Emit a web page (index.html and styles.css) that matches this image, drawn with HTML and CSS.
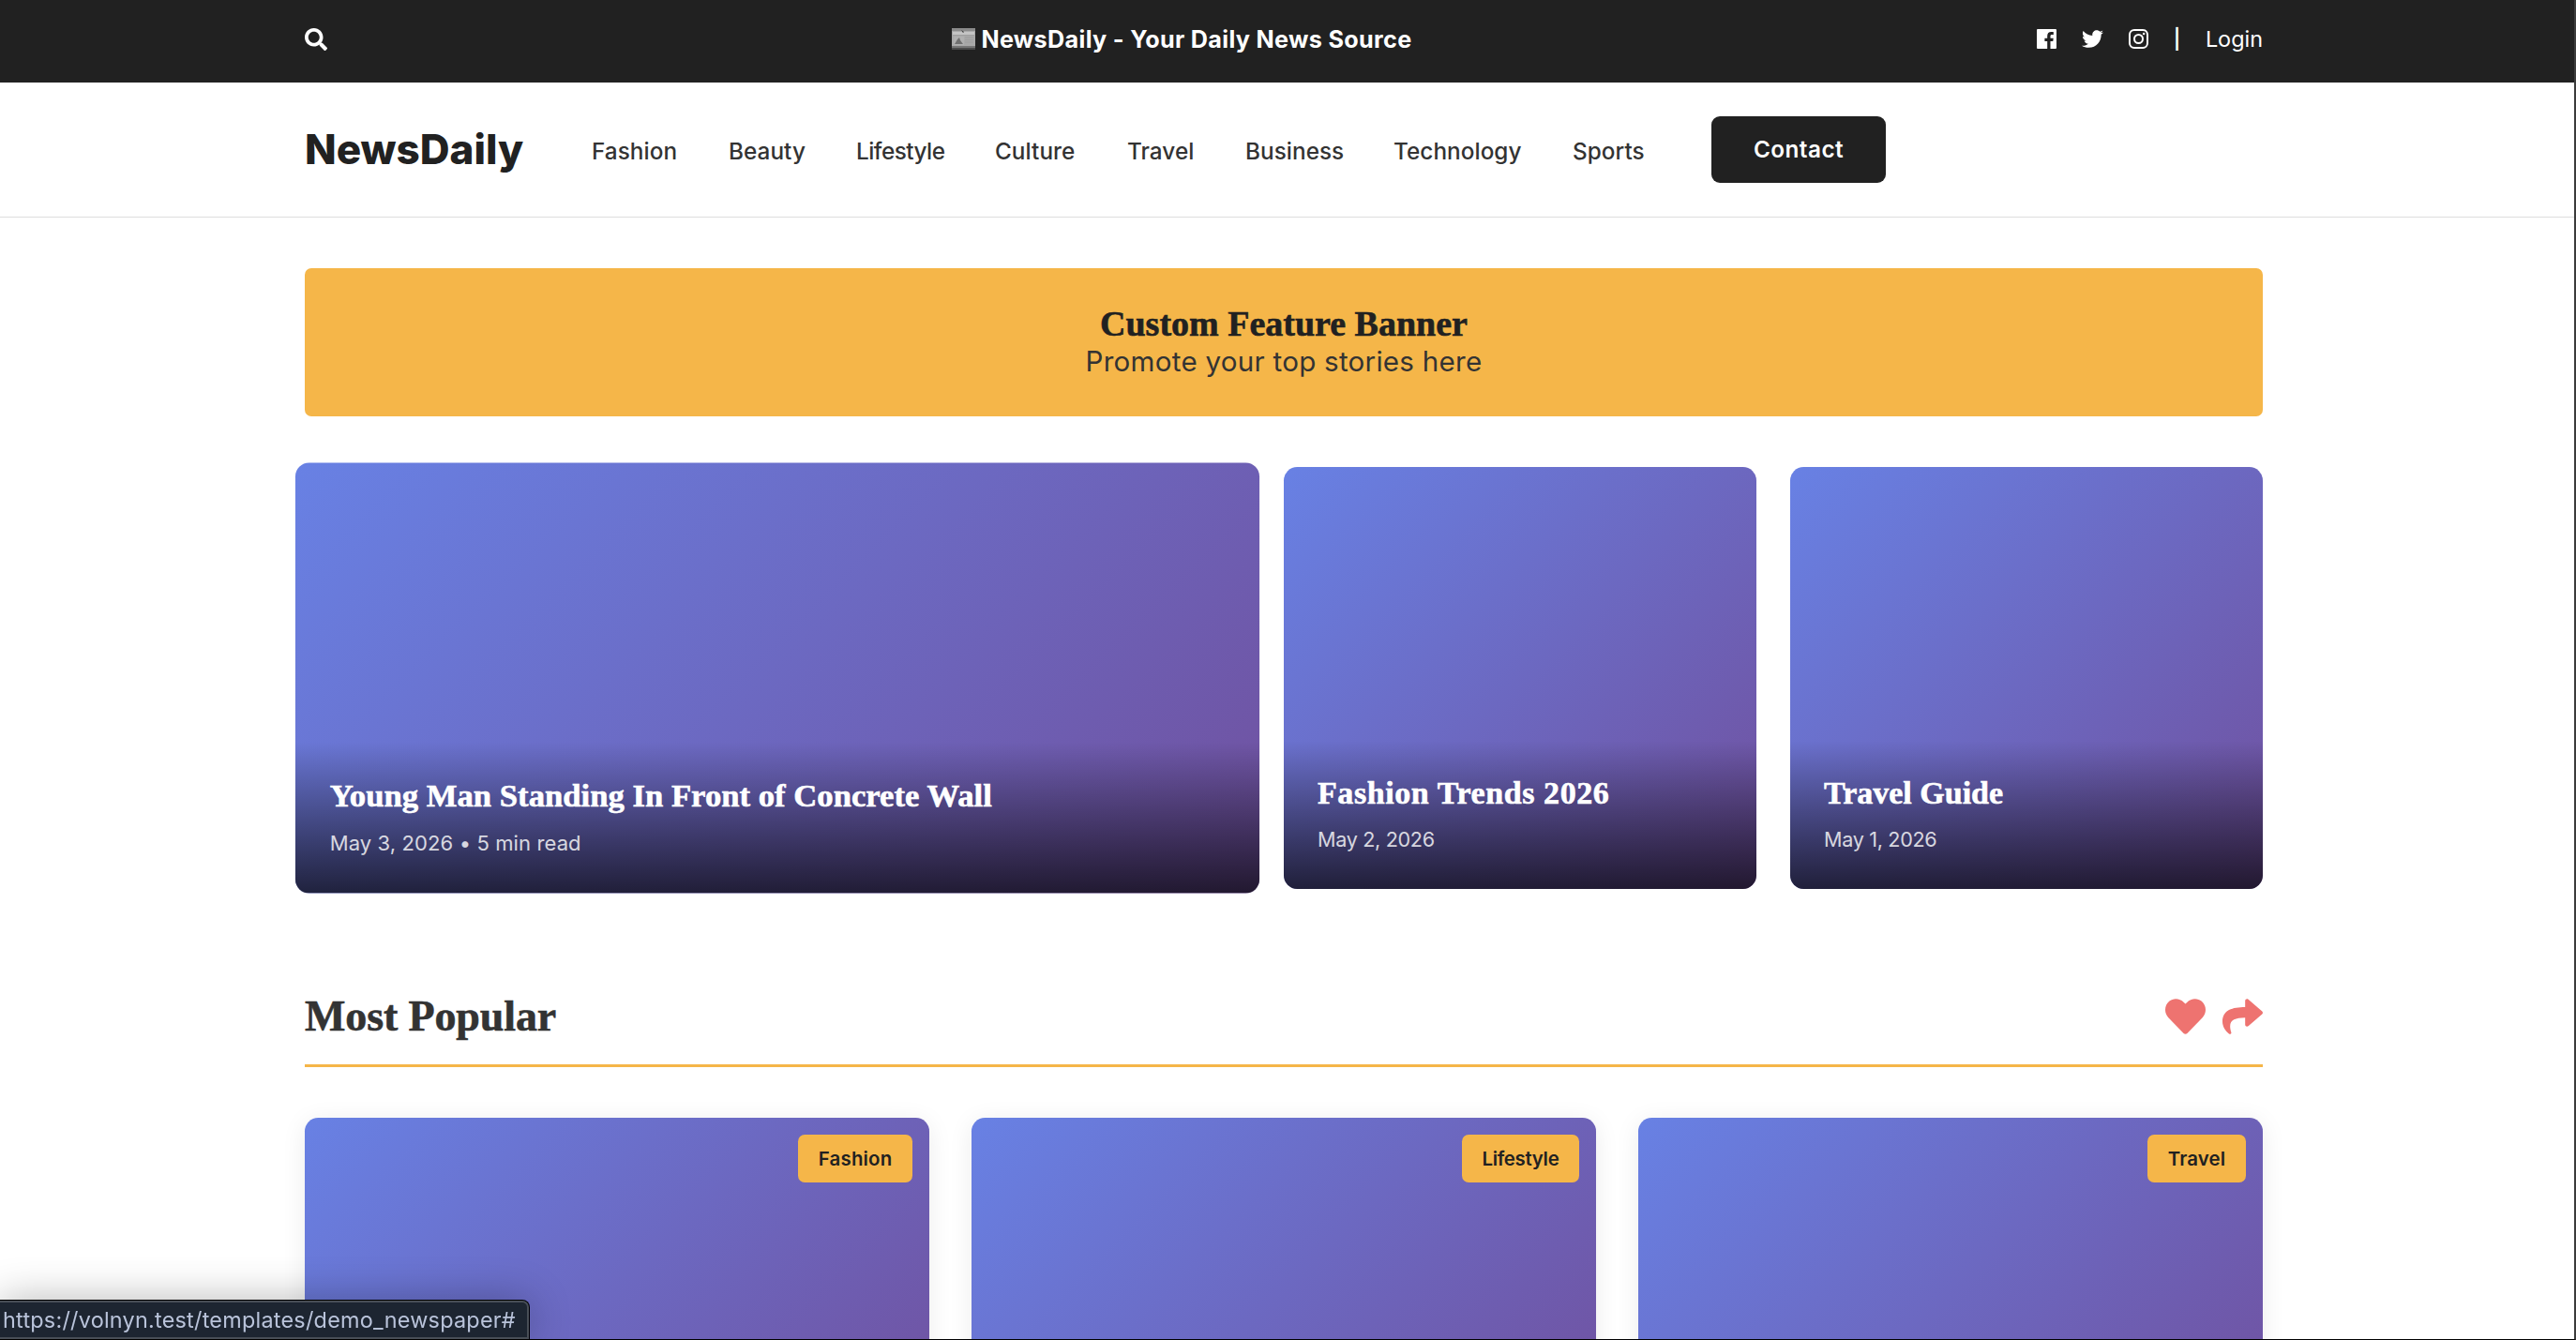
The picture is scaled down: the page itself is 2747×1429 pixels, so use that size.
FILE: index.html
```html
<!DOCTYPE html>
<html lang="en">
<head>
  <meta charset="UTF-8">
  <title>NewsDaily - Your Daily News Source</title>
  <link rel="stylesheet" href="styles.css">
</head>
<body>
  <div class="page">
    <!-- Top Bar -->
    <div class="top-bar">
      <div class="container top-bar-inner">
        <a href="#" class="search">
          <svg viewBox="0 0 512 512" width="24" height="24"><path fill="currentColor" d="M505 442.7L405.3 343c-4.5-4.500-10.600-7-17-7H372c27.600-35.300 44-79.700 44-128C416 93.100 322.900 0 208 0S0 93.100 0 208s93.100 208 208 208c48.300 0 92.700-16.400 128-44v16.300c0 6.400 2.500 12.500 7 17l99.700 99.700c9.400 9.400 24.600 9.400 33.900 0l28.300-28.300c9.400-9.400 9.400-24.600.1-34zM208 336c-70.700 0-128-57.200-128-128 0-70.700 57.200-128 128-128 70.700 0 128 57.200 128 128 0 70.700-57.200 128-128 128z"/></svg>
        </a>
        <div class="top-title">
          <svg viewBox="0 0 25 23" width="25" height="23">
            <rect width="25" height="23" fill="#a9a9a9"/>
            <rect y="0" width="25" height="3" fill="#8b8b8b"/>
            <rect x="1" y="4" width="23" height="3" fill="#c4c4c4"/>
            <path d="M10 2l3 2-1 1z" fill="#333"/>
            <path d="M1 7.500h23M14 10h9M14 12.500h9M14 15h9" stroke="#999" stroke-width=".6"/>
            <rect x="2" y="9" width="11" height="9" fill="#b0b0b0"/>
            <path d="M3 17l3-5 2-2 1 3 3 4z" fill="#707070"/>
            <rect y="19" width="25" height="2" fill="#777"/>
            <rect y="21" width="25" height="2" fill="#4c4c4c"/>
          </svg>
          <span>NewsDaily - Your Daily News Source</span>
        </div>
        <div class="top-links">
          <a href="#"><svg viewBox="0 0 21 21" width="21" height="21"><path fill="currentColor" d="M1 0h19a1 1 0 0 1 1 1v19a1 1 0 0 1-1 1h-5.500v-8.100h2.800l.4-3.200h-3.200V7.700c0-1 .3-1.600 1.600-1.600h1.700V3.200c-.3 0-1.300-.1-2.500-.1-2.500 0-4.100 1.500-4.100 4.200v2.400H8.400v3.200h2.800V21H1a1 1 0 0 1-1-1V1a1 1 0 0 1 1-1z"/></svg></a>
          <a href="#"><svg viewBox="0 0 512 512" width="23" height="23"><path fill="currentColor" d="M459.370 151.716c.325 4.548.325 9.097.325 13.645 0 138.720-105.583 298.558-298.558 298.558-59.452 0-114.680-17.219-161.137-47.106 8.447.974 16.568 1.299 25.340 1.299 49.055 0 94.213-16.568 130.274-44.832-46.132-.975-84.792-31.188-98.112-72.772 6.498.974 12.995 1.624 19.818 1.624 9.421 0 18.843-1.300 27.614-3.573-48.081-9.747-84.143-51.980-84.143-102.985v-1.299c13.969 7.797 30.214 12.670 47.431 13.319-28.264-18.843-46.781-51.005-46.781-87.391 0-19.492 5.197-37.360 14.294-52.954 51.655 63.675 129.300 105.258 216.365 109.807-1.624-7.797-2.599-15.918-2.599-24.040 0-57.828 46.782-104.934 104.934-104.934 30.213 0 57.502 12.670 76.670 33.137 23.715-4.548 46.456-13.320 66.599-25.340-7.798 24.366-24.366 44.833-46.132 57.827 21.117-2.273 41.584-8.122 60.426-16.243-14.292 20.791-32.161 39.308-52.628 54.253z"/></svg></a>
          <a href="#"><svg viewBox="0 0 21 21" width="21" height="21" fill="none" stroke="currentColor" stroke-width="2"><rect x="1" y="1" width="19" height="19" rx="5"/><circle cx="10.500" cy="10.500" r="4.500"/><circle cx="16.100" cy="4.900" r="1.250" fill="currentColor" stroke="none"/></svg></a>
          <span class="divider">|</span>
          <a href="#" class="login">Login</a>
        </div>
      </div>
    </div>

    <!-- Header -->
    <header class="header">
      <div class="container header-inner">
        <a href="#" class="logo">NewsDaily</a>
        <nav class="nav">
          <a href="#">Fashion</a>
          <a href="#">Beauty</a>
          <a href="#" class="tight">Lifestyle</a>
          <a href="#">Culture</a>
          <a href="#">Travel</a>
          <a href="#">Business</a>
          <a href="#">Technology</a>
          <a href="#">Sports</a>
        </nav>
        <a href="#" class="contact-btn">Contact</a>
      </div>
    </header>

    <main class="container">
      <div class="banner">
        <h2>Custom Feature Banner</h2>
        <p>Promote your top stories here</p>
      </div>

      <div class="hero-grid">
        <div class="hero-card active">
          <div class="overlay">
            <h3>Young Man Standing In Front of Concrete Wall</h3>
            <p class="long">May 3, 2026 • 5 min read</p>
          </div>
        </div>
        <div class="hero-card">
          <div class="overlay">
            <h3 class="wide">Fashion Trends 2026</h3>
            <p>May 2, 2026</p>
          </div>
        </div>
        <div class="hero-card">
          <div class="overlay">
            <h3>Travel Guide</h3>
            <p>May 1, 2026</p>
          </div>
        </div>
      </div>

      <div class="section-header">
        <h2>Most Popular</h2>
        <div class="section-icons">
          <svg viewBox="0 0 512 448" width="43" height="38"><path fill="currentColor" d="M462.300 30.600C407.500-16.100 326-7.700 275.700 44.200L256 64.500l-19.700-20.300C186.100-7.700 104.500-16.100 49.700 30.600c-62.800 53.600-66.100 149.800-9.900 207.900l193.500 199.800c12.500 12.900 32.800 12.900 45.300 0l193.500-199.800c56.300-58.100 53-154.300-9.800-207.900z"/></svg>
          <svg viewBox="0 32 512 448" width="43" height="38"><path fill="currentColor" d="M503.691 189.836L327.687 37.851C312.281 24.546 288 35.347 288 56.015v80.053C127.371 137.907 0 170.100 0 322.326c0 61.441 39.581 122.309 83.333 154.132 13.653 9.931 33.111-2.533 28.077-18.631C66.066 312.814 132.917 274.316 288 272.085V360c0 20.700 24.300 31.453 39.687 18.164l176.004-152c11.071-9.562 11.086-26.753 0-36.328z"/></svg>
        </div>
      </div>

      <div class="card-grid">
        <article class="card"><span class="badge">Fashion</span></article>
        <article class="card"><span class="badge badge-tight">Lifestyle</span></article>
        <article class="card"><span class="badge">Travel</span></article>
      </div>
    </main>
  </div>

  <div class="status-bar">https://volnyn.test/templates/demo_newspaper#</div>
  <div class="window-frame"></div>
</body>
</html>
```
FILE: styles.css
```css
* {
  margin: 0;
  padding: 0;
  box-sizing: border-box;
}
body {
  height: 1429px;
  overflow: hidden;
  background: #fff;
  color: #333;
  font-family: Inter, "Open Sans", sans-serif;
}
h2, h3 {
  -webkit-text-stroke: 0.6px currentColor;
}
a {
  color: inherit;
  text-decoration: none;
}
svg {
  display: block;
}
.page {
  height: 1429px;
  overflow: hidden;
}
.container {
  width: 2160px;
  margin-left: 289px;
  padding: 0 36px;
}

/* Top bar */
.top-bar {
  height: 88px;
  background: #212121;
  color: #fff;
}
.top-bar-inner {
  display: flex;
  justify-content: space-between;
  align-items: center;
  height: 83px;
}
.top-title {
  display: flex;
  align-items: center;
  gap: 6px;
  font-size: 25.2px;
  font-weight: 700;
  letter-spacing: 0.32px;
}
.top-links {
  display: flex;
  align-items: center;
  gap: 27px;
  font-size: 23.4px;
}
.divider {
  width: 7px;
  font-size: 21px;
  font-weight: 600;
  display: flex;
  justify-content: center;
}

/* Header */
.header {
  height: 144px;
  border-bottom: 1px solid #ddd;
}
.header-inner {
  display: flex;
  align-items: center;
  gap: 72px;
  height: 143px;
}
.logo {
  width: 234px;
  padding-bottom: 2px;
  color: #212121;
  font-size: 44px;
  font-weight: 800;
  letter-spacing: 0;
  white-space: nowrap;
}
.nav {
  display: grid;
  grid-template-columns: 92px 82px 94px 87px 72px 104px 137px 75px;
  gap: 54px;
  padding-top: 2px;
  font-size: 24.3px;
  font-weight: 500;
  letter-spacing: 0.05px;
}
.nav .tight {
  letter-spacing: -0.5px;
}
.contact-btn {
  width: 186px;
  height: 71px;
  margin-left: 1px;
  border-radius: 9px;
  background: #212121;
  color: #fff;
  font-size: 24.3px;
  font-weight: 600;
  letter-spacing: 0.45px;
  line-height: 71px;
  text-align: center;
}

/* Banner */
.banner {
  height: 158px;
  margin-top: 54px;
  padding-top: 39px;
  border-radius: 7px;
  background: #f5b649;
  text-align: center;
}
.banner h2 {
  color: #212121;
  font: 700 38px/40px "Liberation Serif", serif;
}
.banner p {
  font-size: 29.6px;
  line-height: 41px;
  letter-spacing: 0.25px;
}

/* Hero */
.hero-grid {
  display: grid;
  grid-template-columns: 1008px 504px 504px;
  gap: 36px;
  margin-top: 54px;
}
.hero-card {
  display: flex;
  align-items: flex-end;
  height: 450px;
  border-radius: 14.4px;
  overflow: hidden;
  background: linear-gradient(135deg, #6881e4 0%, #70509e 100%);
}
.hero-card.active {
  transform: scale(1.02);
}
.overlay {
  width: 100%;
  padding: 36px;
  background: linear-gradient(transparent, rgba(0, 0, 0, 0.7));
  color: #fff;
}
.overlay h3 {
  margin-bottom: 12px;
  font: 700 34px/40px "Liberation Serif", serif;
}
.overlay h3.wide {
  letter-spacing: 0.58px;
}
.overlay p {
  font-size: 21.6px;
  line-height: 34px;
  letter-spacing: -0.33px;
  opacity: 0.8;
}
.overlay p.long {
  letter-spacing: 0.1px;
}

/* Most popular */
.section-header {
  display: flex;
  justify-content: space-between;
  margin-top: 105px;
  padding-bottom: 21px;
  border-bottom: 3px solid #f5b649;
}
.section-header h2 {
  font: 700 46px/61px "Liberation Serif", serif;
  letter-spacing: -0.13px;
}
.section-icons {
  display: flex;
  align-items: center;
  gap: 18px;
  color: #ee7370;
}
.card-grid {
  display: grid;
  grid-template-columns: repeat(3, 666px);
  gap: 45px;
  margin-top: 54px;
}
.card {
  display: flex;
  justify-content: flex-end;
  align-items: flex-start;
  height: 360px;
  padding: 18px;
  border-radius: 14.4px 14.4px 0 0;
  background: linear-gradient(135deg, #6881e4 0%, #70509e 100%);
  box-shadow: 0 4px 27px rgba(0, 0, 0, 0.08);
}
.badge {
  padding: 0 21.6px;
  border-radius: 7.2px;
  background: #f5b649;
  color: #212121;
  font-size: 20.4px;
  font-weight: 600;
  line-height: 51px;
  letter-spacing: 0.2px;
}
.badge-tight {
  letter-spacing: -0.3px;
}

/* Link preview and window edge */
.status-bar {
  position: fixed;
  left: 0;
  bottom: 1px;
  width: 564px;
  height: 41px;
  padding-left: 3px;
  border: 2px solid #484e57;
  border-left: 0;
  border-top-right-radius: 7px;
  background: #1d2531;
  box-shadow: 0 0 0 1px #000, 0 0 45px rgba(0, 0, 0, 0.3);
  color: #b9c3da;
  font-size: 23.4px;
  line-height: 38px;
  letter-spacing: 0.24px;
  white-space: nowrap;
}
.window-frame {
  position: fixed;
  inset: 0;
  border-right: 2px solid #3c3c3c;
  border-bottom: 1px solid #000;
  pointer-events: none;
}
```
